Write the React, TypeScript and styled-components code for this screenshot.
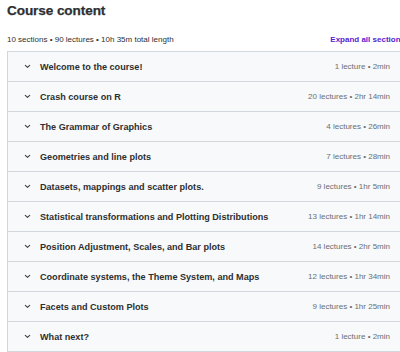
import React from "react";
import styled, { createGlobalStyle } from "styled-components";

const sections = [
	{ title: "Welcome to the course!", meta: "1 lecture • 2min" },
	{ title: "Crash course on R", meta: "20 lectures • 2hr 14min" },
	{ title: "The Grammar of Graphics", meta: "4 lectures • 26min" },
	{ title: "Geometries and line plots", meta: "7 lectures • 28min" },
	{ title: "Datasets, mappings and scatter plots.", meta: "9 lectures • 1hr 5min" },
	{ title: "Statistical transformations and Plotting Distributions", meta: "13 lectures • 1hr 14min" },
	{ title: "Position Adjustment, Scales, and Bar plots", meta: "14 lectures • 2hr 5min" },
	{ title: "Coordinate systems, the Theme System, and Maps", meta: "12 lectures • 1hr 34min" },
	{ title: "Facets and Custom Plots", meta: "9 lectures • 1hr 25min" },
	{ title: "What next?", meta: "1 lecture • 2min" },
];

const Chevron = () => (
	<svg width="7" height="5" viewBox="0 0 7 5" fill="none">
		<path d="M1.3 1.4 L3.5 3.4 L5.7 1.4" stroke="#3e4143" strokeWidth="1.1" strokeLinecap="round" strokeLinejoin="round" />
	</svg>
);

const App = () => {
	return (
		<>
			<GlobalStyle />
			<Page>
				<Title>Course content</Title>
				<Toolbar>
					<Summary>10 sections • 90 lectures • 10h 35m total length</Summary>
					<ExpandButton>Expand all sections</ExpandButton>
				</Toolbar>

				<SectionList>
					{sections.map((s) => (
						<SectionRow key={s.title}>
							<ChevronBox>
								<Chevron />
							</ChevronBox>
							<SectionTitle>{s.title}</SectionTitle>
							<SectionMeta>{s.meta}</SectionMeta>
						</SectionRow>
					))}
				</SectionList>
			</Page>
		</>
	);
};

export default App;

const GlobalStyle = createGlobalStyle`
	html, body {
		margin: 0;
		padding: 0;
		overflow: hidden;
		background: #ffffff;
	}

	body {
		font-family: "Liberation Sans", Arial, sans-serif;
		color: #2d2f31;
	}
`;

const Page = styled.div`
	width: 398px;
	padding-left: 7px;
`;

const Title = styled.div`
	height: 22px;
	line-height: 22px;

	font-weight: 700;
	font-size: 13.6px;
	color: #2d2f31;
	letter-spacing: -0.1px;
	-webkit-text-stroke: 0.25px #2d2f31;
`;

const Toolbar = styled.div`
	display: flex;
	align-items: center;
	justify-content: space-between;

	height: 12px;
	margin-top: 11px;
	margin-bottom: 6px;
`;

const Summary = styled.div`
	font-size: 8px;
	color: #2d2f31;
	white-space: nowrap;
`;

const ExpandButton = styled.div`
	font-size: 8px;
	font-weight: 700;
	color: #5624d0;
	white-space: nowrap;
`;

const SectionList = styled.div`
	border: 1px solid #d1d7dc;
	border-bottom: none;
`;

const SectionRow = styled.div`
	display: flex;
	align-items: center;

	height: 29px;
	padding: 0 14px 0 16px;

	background: #f7f9fa;
	border-bottom: 1px solid #d1d7dc;
`;

const ChevronBox = styled.div`
	display: flex;
	align-items: center;
	width: 16px;
	flex-shrink: 0;
`;

const SectionTitle = styled.div`
	flex: 1;

	font-size: 9.1px;
	font-weight: 700;
	color: #2d2f31;
	white-space: nowrap;
`;

const SectionMeta = styled.div`
	font-size: 8px;
	color: #6a6f73;
	white-space: nowrap;
`;
